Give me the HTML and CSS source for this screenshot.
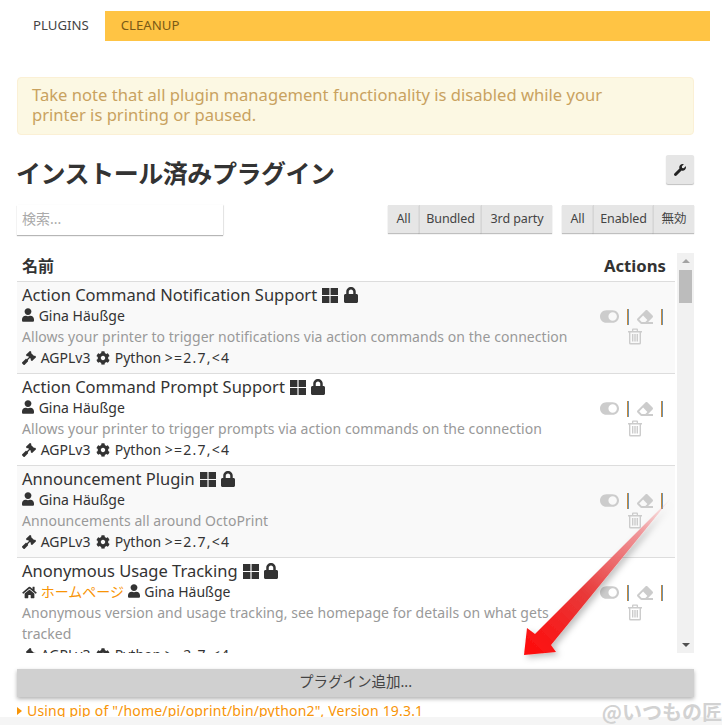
FILE: index.html
```html
<!DOCTYPE html>
<html lang="ja">
<head>
<meta charset="utf-8">
<title>Plugin Manager</title>
<link rel="stylesheet" href="styles.css">
</head>
<body>
<svg class="defs" aria-hidden="true">
  <symbol id="i-user" viewBox="0 0 448 512"><path d="M224 256c70.7 0 128-57.3 128-128S294.7 0 224 0 96 57.3 96 128s57.3 128 128 128zm89.6 32h-16.7c-22.2 10.2-46.9 16-72.9 16s-50.6-5.8-72.9-16h-16.7C60.2 288 0 348.2 0 422.4V464c0 26.5 21.500 48 48 48h352c26.500 0 48-21.500 48-48v-41.600c0-74.200-60.200-134.400-134.400-134.400z"/></symbol>
  <symbol id="i-lock" viewBox="0 0 448 512"><path d="M400 224h-24v-72C376 68.200 307.800 0 224 0S72 68.200 72 152v72H48c-26.500 0-48 21.500-48 48v192c0 26.500 21.500 48 48 48h352c26.500 0 48-21.500 48-48V272c0-26.500-21.500-48-48-48zm-104 0H152v-72c0-39.700 32.300-72 72-72s72 32.300 72 72v72z"/></symbol>
  <symbol id="i-grid" viewBox="0 0 16 15"><path d="M0 0h7.400v7H0zM8.600 0H16v7H8.600zM0 8h7.400v7H0zM8.600 8H16v7H8.600z"/></symbol>
  <symbol id="i-gavel" viewBox="0 0 512 512"><path d="M504.971 199.362l-22.627-22.627c-9.373-9.373-24.569-9.373-33.941 0l-5.657 5.657L329.608 69.255l5.657-5.657c9.373-9.373 9.373-24.569 0-33.941L312.638 7.029c-9.373-9.373-24.569-9.373-33.941 0L154.246 131.48c-9.373 9.373-9.373 24.569 0 33.941l22.627 22.627c9.373 9.373 24.569 9.373 33.941 0l5.657-5.657 39.598 39.598-81.04 81.04-5.657-5.657c-12.497-12.497-32.758-12.497-45.255 0L9.373 412.118c-12.497 12.497-12.497 32.758 0 45.255l45.255 45.255c12.497 12.497 32.758 12.497 45.255 0l114.745-114.745c12.497-12.497 12.497-32.758 0-45.255l-5.657-5.657 81.04-81.04 39.598 39.598-5.657 5.657c-9.373 9.373-9.373 24.569 0 33.941l22.627 22.627c9.373 9.373 24.569 9.373 33.941 0l124.451-124.451c9.372-9.372 9.372-24.568 0-33.941z"/></symbol>
  <symbol id="i-cog" viewBox="0 0 512 512"><path d="M487.4 315.7l-42.6-24.6c4.3-23.2 4.3-47 0-70.2l42.6-24.6c4.9-2.8 7.1-8.6 5.5-14-11.1-35.6-30-67.8-54.7-94.6-3.8-4.1-10-5.1-14.8-2.3L380.8 110c-17.9-15.4-38.5-27.3-60.8-35.1V25.8c0-5.6-3.9-10.5-9.4-11.7-36.7-8.2-74.3-7.8-109.2 0-5.5 1.2-9.4 6.1-9.4 11.7V75c-22.2 7.9-42.8 19.8-60.8 35.1L88.7 85.5c-4.9-2.8-11-1.9-14.8 2.3-24.7 26.7-43.6 58.9-54.7 94.6-1.7 5.4.6 11.2 5.5 14L67.3 221c-4.3 23.2-4.3 47 0 70.2l-42.6 24.6c-4.9 2.8-7.1 8.6-5.5 14 11.1 35.6 30 67.8 54.7 94.6 3.8 4.1 10 5.1 14.8 2.3l42.6-24.6c17.9 15.4 38.5 27.3 60.8 35.1v49.2c0 5.6 3.9 10.5 9.4 11.7 36.7 8.2 74.3 7.8 109.2 0 5.5-1.2 9.4-6.1 9.4-11.7v-49.2c22.2-7.9 42.8-19.8 60.8-35.1l42.6 24.6c4.9 2.8 11 1.9 14.8-2.3 24.7-26.7 43.6-58.9 54.7-94.6 1.5-5.5-.7-11.3-5.6-14.1zM256 336c-44.1 0-80-35.9-80-80s35.9-80 80-80 80 35.9 80 80-35.9 80-80 80z"/></symbol>
  <symbol id="i-home" viewBox="0 0 576 512"><path d="M280.37 148.26L96 300.11V464a16 16 0 0 0 16 16l112.06-.29a16 16 0 0 0 15.92-16V368a16 16 0 0 1 16-16h64a16 16 0 0 1 16 16v95.64a16 16 0 0 0 16 16.05L464 480a16 16 0 0 0 16-16V300L295.67 148.26a12.19 12.19 0 0 0-15.3 0zM571.6 251.47L488 182.56V44.05a12 12 0 0 0-12-12h-56a12 12 0 0 0-12 12v72.61L318.47 43a48 48 0 0 0-61 0L4.34 251.47a12 12 0 0 0-1.6 16.9l25.5 31A12 12 0 0 0 45.15 301l235.22-193.74a12.19 12.19 0 0 1 15.3 0L530.9 301a12 12 0 0 0 16.9-1.6l25.5-31a12 12 0 0 0-1.7-16.93z"/></symbol>
  <symbol id="i-wrench" viewBox="0 0 512 512"><path d="M507.73 109.1c-2.24-9.03-13.54-12.09-20.12-5.51l-74.36 74.36-67.88-11.31-11.31-67.88 74.36-74.36c6.62-6.62 3.43-17.9-5.66-20.16-47.38-11.74-99.55.91-136.58 37.93-39.64 39.64-50.55 97.1-34.05 147.2L18.74 402.76c-24.99 24.99-24.99 65.51 0 90.5 24.99 24.99 65.51 24.99 90.5 0l213.21-213.21c50.12 16.71 107.47 5.68 147.37-34.22 37.07-37.07 49.7-89.32 37.91-136.73z"/></symbol>
  <symbol id="i-eraser" viewBox="0 0 512 512"><path d="M497.941 273.941c18.745-18.745 18.745-49.137 0-67.882l-160-160c-18.745-18.745-49.136-18.746-67.883 0l-256 256c-18.745 18.745-18.745 49.137 0 67.882l96 96A48.004 48.004 0 0 0 144 480h356c6.627 0 12-5.373 12-12v-40c0-6.627-5.373-12-12-12H355.883l142.058-142.059zm-302.627-62.627l137.373 137.373L265.373 416H150.628l-80-80 124.686-124.686z"/></symbol>
  <symbol id="i-toggle" viewBox="0 0 576 512"><path d="M384 64H192C86 64 0 150 0 256s86 192 192 192h192c106 0 192-86 192-192S490 64 384 64zm0 320c-70.8 0-128-57.3-128-128 0-70.8 57.3-128 128-128 70.8 0 128 57.3 128 128 0 70.8-57.3 128-128 128z"/></symbol>
  <symbol id="i-trash" viewBox="0 0 14 16"><path d="M5 0h4a1 1 0 0 1 1 1v1.500h4V4h-1v10.500a1.500 1.500 0 0 1-1.500 1.500h-9A1.500 1.500 0 0 1 1 14.500V4H0V2.500h4V1a1 1 0 0 1 1-1zm.3 1.300v1.200h3.400V1.300zM2.400 4v10.300c0 .2.100.3.300.3h8.600c.2 0 .3-.1.300-.3V4zM4 5.500h1.400v7.500H4zm2.300 0h1.400v7.500H6.300zm2.300 0H10v7.500H8.600z"/></symbol>
</svg>

<div class="page">
  <nav class="tabs">
    <a class="tab tab-active">PLUGINS</a>
    <a class="tab">CLEANUP</a>
  </nav>

  <div class="alert">Take note that all plugin management functionality is disabled while your printer is printing or paused.</div>

  <div class="title-row">
    <h2 class="title">インストール済みプラグイン</h2>
    <button class="btn btn-icon"><svg class="ic ic-wrench"><use href="#i-wrench"/></svg></button>
  </div>

  <div class="filter-row">
    <div class="search">検索...</div>
    <div class="groups">
      <div class="group"><span class="btn b-all">All</span><span class="btn b-bundled">Bundled</span><span class="btn b-third">3rd party</span></div>
      <div class="group"><span class="btn b-all">All</span><span class="btn b-enabled">Enabled</span><span class="btn b-off">無効</span></div>
    </div>
  </div>

  <div class="table-wrap">
    <div class="table">
      <div class="thead"><span>名前</span><span class="th-actions">Actions</span></div>

      <article class="row row-odd">
        <div class="info">
          <div class="name">Action Command Notification Support <svg class="ic ic-grid"><use href="#i-grid"/></svg> <svg class="ic ic-lock"><use href="#i-lock"/></svg></div>
          <div class="meta"><svg class="ic ic-user"><use href="#i-user"/></svg> Gina Häußge</div>
          <div class="desc">Allows your printer to trigger notifications via action commands on the connection</div>
          <div class="meta"><svg class="ic ic-gavel"><use href="#i-gavel"/></svg> AGPLv3 <svg class="ic ic-cog"><use href="#i-cog"/></svg> Python <span class="ver">&gt;=2.7,&lt;4</span></div>
        </div>
        <div class="actions">
          <svg class="ic ic-toggle"><use href="#i-toggle"/></svg><i class="sep"></i><svg class="ic ic-eraser"><use href="#i-eraser"/></svg><i class="sep"></i><svg class="ic ic-trash"><use href="#i-trash"/></svg>
        </div>
      </article>

      <article class="row">
        <div class="info">
          <div class="name">Action Command Prompt Support <svg class="ic ic-grid"><use href="#i-grid"/></svg> <svg class="ic ic-lock"><use href="#i-lock"/></svg></div>
          <div class="meta"><svg class="ic ic-user"><use href="#i-user"/></svg> Gina Häußge</div>
          <div class="desc">Allows your printer to trigger prompts via action commands on the connection</div>
          <div class="meta"><svg class="ic ic-gavel"><use href="#i-gavel"/></svg> AGPLv3 <svg class="ic ic-cog"><use href="#i-cog"/></svg> Python <span class="ver">&gt;=2.7,&lt;4</span></div>
        </div>
        <div class="actions">
          <svg class="ic ic-toggle"><use href="#i-toggle"/></svg><i class="sep"></i><svg class="ic ic-eraser"><use href="#i-eraser"/></svg><i class="sep"></i><svg class="ic ic-trash"><use href="#i-trash"/></svg>
        </div>
      </article>

      <article class="row row-odd">
        <div class="info">
          <div class="name">Announcement Plugin <svg class="ic ic-grid"><use href="#i-grid"/></svg> <svg class="ic ic-lock"><use href="#i-lock"/></svg></div>
          <div class="meta"><svg class="ic ic-user"><use href="#i-user"/></svg> Gina Häußge</div>
          <div class="desc">Announcements all around OctoPrint</div>
          <div class="meta"><svg class="ic ic-gavel"><use href="#i-gavel"/></svg> AGPLv3 <svg class="ic ic-cog"><use href="#i-cog"/></svg> Python <span class="ver">&gt;=2.7,&lt;4</span></div>
        </div>
        <div class="actions">
          <svg class="ic ic-toggle"><use href="#i-toggle"/></svg><i class="sep"></i><svg class="ic ic-eraser"><use href="#i-eraser"/></svg><i class="sep"></i><svg class="ic ic-trash"><use href="#i-trash"/></svg>
        </div>
      </article>

      <article class="row">
        <div class="info">
          <div class="name">Anonymous Usage Tracking <svg class="ic ic-grid"><use href="#i-grid"/></svg> <svg class="ic ic-lock"><use href="#i-lock"/></svg></div>
          <div class="meta"><svg class="ic ic-home"><use href="#i-home"/></svg> <a class="link">ホームページ</a> <svg class="ic ic-user"><use href="#i-user"/></svg> Gina Häußge</div>
          <div class="desc">Anonymous version and usage tracking, see homepage for details on what gets tracked</div>
          <div class="meta"><svg class="ic ic-gavel"><use href="#i-gavel"/></svg> AGPLv3 <svg class="ic ic-cog"><use href="#i-cog"/></svg> Python <span class="ver">&gt;=2.7,&lt;4</span></div>
        </div>
        <div class="actions">
          <svg class="ic ic-toggle"><use href="#i-toggle"/></svg><i class="sep"></i><svg class="ic ic-eraser"><use href="#i-eraser"/></svg><i class="sep"></i><svg class="ic ic-trash"><use href="#i-trash"/></svg>
        </div>
      </article>
    </div>
    <div class="scrollbar">
      <span class="arrow arrow-up"></span>
      <span class="track"><span class="thumb"></span></span>
      <span class="arrow arrow-down"></span>
    </div>
  </div>

  <button class="add">プラグイン追加...</button>

  <div class="log"><span class="caret"></span>Using pip of "/home/pi/oprint/bin/python2", Version 19.3.1</div>
  <div class="footer-band"></div>
</div>

<svg class="overlay-arrow" viewBox="0 0 170 170" aria-hidden="true">
  <defs>
    <linearGradient id="arrow-fill" x1="150" y1="2" x2="5" y2="160" gradientUnits="userSpaceOnUse">
      <stop offset="0" stop-color="#f5a0a0" stop-opacity="0"/>
      <stop offset=".22" stop-color="#f08e92" stop-opacity=".9"/>
      <stop offset=".6" stop-color="#e83a3a"/>
      <stop offset="1" stop-color="#ff0a0a"/>
    </linearGradient>
    <filter id="arrow-shadow" x="-20%" y="-20%" width="150%" height="150%">
      <feDropShadow dx="3" dy="3" stdDeviation="3" flood-color="#000" flood-opacity=".25"/>
    </filter>
  </defs>
  <path d="M150 2 L29 150 L34 157 L2 160 L5 133 L13 139 Z" fill="url(#arrow-fill)" filter="url(#arrow-shadow)"/>
</svg>
<div class="watermark">@いつもの匠</div>
</body>
</html>
```
FILE: styles.css
```css
* { box-sizing: border-box; }
html, body { margin: 0; height: 100%; }
body {
  width: 722px;
  height: 725px;
  overflow: hidden;
  position: relative;
  background: #fff;
  color: #333;
  font-family: "Noto Sans", "Noto Sans CJK JP", sans-serif;
}
.defs { position: absolute; width: 0; height: 0; }
.ic { display: inline-block; fill: currentColor; vertical-align: -2px; }
.page { padding: 11px 12px 0 17px; height: 725px; display: flex; flex-direction: column; }

.tabs { display: flex; height: 30px; background: #ffc444; flex: none; }
.tab { padding: 0 16px; font-size: 13.2px; line-height: 29px; color: #7a5a16; }
.tab-active { background: #fff; color: #444; }

.alert {
  margin-top: 36px;
  margin-right: 16px;
  height: 58px;
  flex: none;
  padding: 7px 80px 0 14px;
  background: #fcf8e3;
  border: 1px solid #fbf0d5;
  border-radius: 4px;
  color: #c9a25f;
  font-size: 16.6px;
  line-height: 20px;
}

.title-row { display: flex; justify-content: space-between; align-items: flex-start; margin: 20px 16px 0 0; height: 50px; flex: none; }
.title { margin: 2px 0 0 -1px; font-size: 25px; line-height: 30px; font-weight: 700; color: #333; font-family: "Noto Sans CJK JP", sans-serif; letter-spacing: -.45px; }

.btn {
  background: #e6e6e6;
  color: #444;
  font-size: 12.5px;
  line-height: 27px;
  height: 28px;
  text-align: center;
  letter-spacing: -.1px;
  box-shadow: 0 1px 1px rgba(0,0,0,.25);
  border: 0;
  font-family: inherit;
}
.b-all { width: 31px; }
.b-bundled { width: 62px; }
.b-third { width: 71px; }
.b-enabled { width: 60px; }
.b-off { width: 41px; }
.btn-icon { width: 28px; height: 29px; padding: 0; display: flex; align-items: center; justify-content: center; border-radius: 2px; color: #222; }
.ic-wrench { width: 12px; height: 12px; }

.filter-row { display: flex; justify-content: space-between; margin-right: 16px; flex: none; }
.search {
  width: 206px;
  height: 30px;
  padding: 0 5px;
  font-size: 14px;
  line-height: 28px;
  color: #aaa;
  box-shadow: 0 1px 1px rgba(0,0,0,.28), 1px 0 1px rgba(0,0,0,.06);
}
.groups { display: flex; gap: 10px; }
.group { display: flex; border-radius: 2px; }
.group .btn + .btn { border-left: 1px solid #d6d6d6; }

.table-wrap { display: flex; margin-top: 18px; margin-right: 16px; height: 400px; flex: none; gap: 2px; }
.table { flex: 1; min-width: 0; overflow: hidden; }
.thead {
  display: flex;
  justify-content: space-between;
  height: 29px;
  padding: 2px 9px 0 5px;
  font-size: 16px;
  line-height: 22px;
  font-weight: 700;
  color: #333;
  border-bottom: 1px solid #ddd;
}
.th-actions { font-size: 16.7px; }
.row { display: flex; height: 92px; border-bottom: 1px solid #ddd; padding-left: 5px; }
.row:last-child { height: auto; border-bottom: 0; }
.row-odd { background: #f9f9f9; }
.info { flex: 1; min-width: 0; padding: 2px 8px 0 0; }
.name { font-size: 16.5px; line-height: 21px; color: #333; }
.meta { font-size: 14px; line-height: 21px; color: #333; }
.desc { font-size: 14px; line-height: 21px; color: #999; letter-spacing: .05px; }
.ver { letter-spacing: 1.25px; }
.link { color: #f89406; }
.ic-grid { width: 16px; height: 15px; margin-left: 1px; color: #333; }
.ic-lock { width: 14px; height: 16px; margin-left: 1px; color: #333; }
.ic-user { width: 12px; height: 14px; vertical-align: -1px; margin-right: 1px; }
.ic-gavel { width: 14px; height: 14px; margin-right: 1px; }
.ic-cog { width: 14px; height: 14px; margin: 0 1px 0 2px; }
.ic-home { width: 15px; height: 13px; }

.actions {
  width: 76px;
  flex: none;
  margin: 26px 6px 0 0;
  display: flex;
  flex-wrap: wrap;
  align-content: flex-start;
  justify-content: center;
  align-items: center;
  color: #ccc;
  height: 42px;
}
.ic-toggle { width: 19px; height: 17px; }
.ic-eraser { width: 16px; height: 16px; margin-left: 8px; }
.sep { width: 2px; height: 16px; margin-left: 8px; background: linear-gradient(90deg, #c98a3a 60%, #6a93b5 60%); }
.ic-trash { width: 14px; height: 17px; margin: 3px 0 0 8px; }

.scrollbar { width: 17px; flex: none; background: #f1f1f1; display: flex; flex-direction: column; align-items: center; }
.arrow { flex: none; width: 0; height: 0; border-left: 4px solid transparent; border-right: 4px solid transparent; }
.arrow-up { margin-top: 6px; border-bottom: 4px solid #a3a3a3; }
.arrow-down { margin-bottom: 6px; border-top: 4px solid #505050; }
.track { flex: 1; width: 100%; padding: 7px 2px 0; }
.thumb { display: block; height: 33px; background: #bcbcbc; }

.add {
  flex: none;
  margin: 16px 16px 0 0;
  height: 28px;
  padding: 0 0 5px;
  border: 0;
  background: #d0d0d0;
  color: #444;
  font-family: inherit;
  font-size: 14.5px;
  box-shadow: 0 2px 4px rgba(0,0,0,.3);
}
.log { flex: none; margin-top: 4px; font-size: 14px; line-height: 20px; color: #f89406; height: 16px; overflow: hidden; display: flex; align-items: flex-start; letter-spacing: .18px; }
.caret { flex: none; width: 0; height: 0; margin: 6px 5px 0 0; border-left: 5px solid #f89406; border-top: 4px solid transparent; border-bottom: 4px solid transparent; }
.footer-band { position: absolute; left: 0; right: 0; bottom: 0; height: 8px; background: #f5f5f5; }

.overlay-arrow { position: absolute; left: 522px; top: 495px; width: 170px; height: 170px; pointer-events: none; }
.watermark { position: absolute; right: 0; bottom: 0; font-size: 20px; line-height: 26px; font-weight: 700; color: #d2d2d2; font-family: "Noto Sans CJK JP", sans-serif; }
```
